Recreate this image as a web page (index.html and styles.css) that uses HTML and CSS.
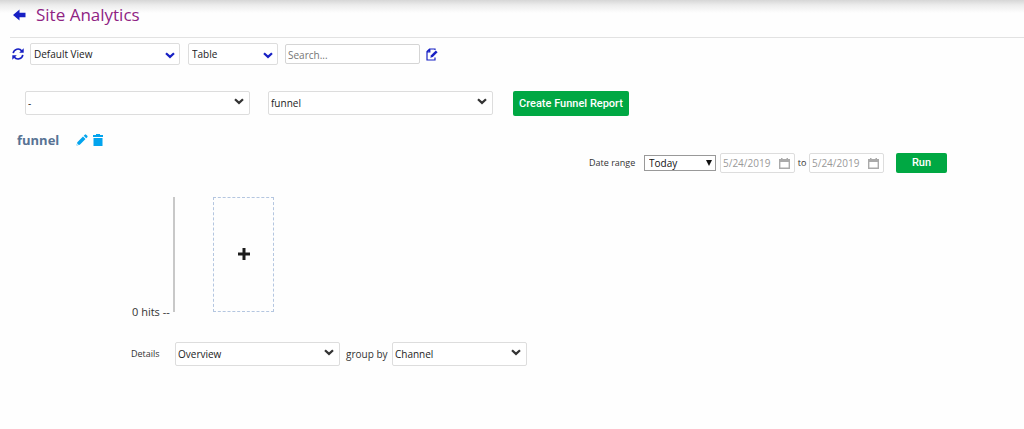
FILE: index.html
```html
<!DOCTYPE html>
<html lang="en">
<head>
<meta charset="utf-8">
<title>Site Analytics</title>
<link rel="stylesheet" href="styles.css">
</head>
<body>
<svg class="defs" width="0" height="0" aria-hidden="true">
  <symbol id="chevron" viewBox="0 0 10 7"><path d="M1 1.2 5 4.9 9 1.2" fill="none" stroke="currentColor" stroke-width="2.2"/></symbol>
  <symbol id="calendar" viewBox="0 0 11 11"><path d="M.7 1.700h9.600v8.600H.7z" fill="none" stroke="currentColor" stroke-width="1.400"/><path d="M0 1h11v3H0zM2 0h1.500v2H2zM7.500 0H9v2H7.500z" fill="currentColor"/></symbol>
</svg>
<header class="page-header">
  <a class="back" href="#" aria-label="Back">
    <svg width="13" height="12" viewBox="0 0 13 12"><path d="M0 6 6.500.5v3.300h6v4.400h-6v3.300z" fill="#1720c4"/></svg>
  </a>
  <h1 class="title">Site Analytics</h1>
</header>
<main>
  <div class="toolbar">
    <button class="icon-button refresh" type="button" aria-label="Refresh">
      <svg width="12" height="12" viewBox="0 0 12 12"><path d="M1.200 5.200A4.800 4.800 0 0 1 9.800 3M10.800 6.800A4.800 4.800 0 0 1 2.200 9" fill="none" stroke="#1720c4" stroke-width="1.600"/><path d="M11.700.3v4.500H7.200zM.3 11.700V7.200h4.500z" fill="#1720c4"/></svg>
    </button>
    <span class="picker picker-blue view"><select aria-label="View"><option>Default View</option></select><svg class="chevron"><use href="#chevron"/></svg></span>
    <span class="picker picker-blue layout"><select aria-label="Layout"><option>Table</option></select><svg class="chevron"><use href="#chevron"/></svg></span>
    <input class="search" type="text" placeholder="Search..." aria-label="Search">
    <button class="icon-button edit" type="button" aria-label="Edit view">
      <svg width="12" height="13" viewBox="0 0 12 13"><path d="M9 2V1H3.500L1 3.500V12h8V9.500M1 3.800h2.800V1" fill="none" stroke="#1720c4" stroke-width="1.200"/><path d="M9.800 2.400 11.600 4.200 6.800 9l-2.500.7.700-2.500z" fill="#1720c4"/></svg>
    </button>
  </div>

  <div class="reports">
    <span class="picker report"><select aria-label="Report group"><option>-</option></select><svg class="chevron"><use href="#chevron"/></svg></span>
    <span class="picker report"><select aria-label="Report type"><option>funnel</option></select><svg class="chevron"><use href="#chevron"/></svg></span>
    <button class="button create" type="button">Create Funnel Report</button>
  </div>

  <div class="report-heading">
    <h2 class="report-name">funnel</h2>
    <button class="icon-button pencil" type="button" aria-label="Rename report">
      <svg width="12" height="12" viewBox="0 0 12 12"><path d="M.5 11.500 1.300 8.200 7 2.500 9.500 5 3.800 10.700zM7.700 1.800l1.100-1.100q.7-.7 1.400 0l1.100 1.100q.7.7 0 1.400l-1.100 1.100z" fill="#03a4ee"/><path d="m1.300 9.300 1.400 1.400-1.600.3z" fill="#fff"/></svg>
    </button>
    <button class="icon-button trash" type="button" aria-label="Delete report">
      <svg width="10" height="12" viewBox="0 0 10 12"><path d="M0 1h3V0h4v1h3v2H0zM.5 4h9v8h-9z" fill="#03a4ee"/></svg>
    </button>
  </div>

  <form class="range">
    <label class="range-label" for="range">Date range</label>
    <span class="native"><select id="range"><option>Today</option></select><svg class="triangle" viewBox="0 0 6 6"><path d="M0 0h6L3 6z" fill="#111"/></svg></span>
    <span class="date"><input id="from" type="text" value="5/24/2019" aria-label="From" disabled><svg class="calendar"><use href="#calendar"/></svg></span>
    <label class="to" for="until">to</label>
    <span class="date"><input id="until" type="text" value="5/24/2019" disabled><svg class="calendar"><use href="#calendar"/></svg></span>
    <button class="button run" type="button">Run</button>
  </form>

  <section class="funnel" aria-label="Funnel">
    <span class="hits">0 hits --</span>
    <div class="axis"></div>
    <button class="add-step" type="button" aria-label="Add step">
      <svg width="12" height="12" viewBox="0 0 12 12"><path d="M6 0v12M0 6h12" stroke="#1c1c1c" stroke-width="3"/></svg>
    </button>
  </section>

  <div class="details">
    <label class="details-label" for="details">Details</label>
    <span class="picker detail"><select id="details"><option>Overview</option></select><svg class="chevron"><use href="#chevron"/></svg></span>
    <label class="group-label" for="group">group by</label>
    <span class="picker group"><select id="group"><option>Channel</option></select><svg class="chevron"><use href="#chevron"/></svg></span>
  </div>
</main>
</body>
</html>
```
FILE: styles.css
```css
* { box-sizing: border-box; }
body {
  margin: 0;
  background: #fefefe;
  color: #333;
  font: 10px/16px "Open Sans", "Noto Sans", sans-serif;
}
button, input, select { font: inherit; color: inherit; margin: 0; }
svg { display: block; }
.defs { position: absolute; }

.page-header {
  display: flex;
  align-items: center;
  height: 37px;
  padding: 0 0 7px 13px;
  background: linear-gradient(#d6d6d6, #ececec 5px, #fefefe 13px);
}
.title {
  margin: 0 0 0 10px;
  font-size: 17px;
  line-height: 24px;
  font-weight: 400;
  color: #8f2383;
}

.toolbar {
  display: flex;
  align-items: center;
  margin-left: 10px;
  padding: 5px 0 0 2px;
  border-top: 1px solid #e2e2e2;
}
.icon-button { padding: 0; border: 0; background: none; }
.refresh { margin-right: 6px; }

.picker { display: grid; align-items: center; color: #222; }
.picker select {
  grid-area: 1 / 1;
  width: 100%;
  height: 24px;
  padding: 0 20px 0 2px;
  appearance: none;
  background: #fff;
  border: 1px solid #ddd;
  border-radius: 2px;
}
.chevron {
  grid-area: 1 / 1;
  justify-self: end;
  width: 10px;
  height: 7px;
  margin: 0 6px 3px 0;
  pointer-events: none;
  color: #333;
}
.picker-blue select { height: 22px; padding-left: 3px; }
.picker-blue .chevron { color: #1720c4; margin: 3px 5px 0 0; }
.view { width: 150px; margin-right: 8px; }
.layout { width: 90px; margin-right: 7px; }
.search {
  width: 135px;
  height: 20px;
  padding: 1px 2px 0;
  background: #fff;
  border: 1px solid #d5d5d5;
  border-radius: 2px;
}
.search::placeholder { color: #757575; opacity: 1; }
.edit { margin-left: 6px; }

.reports { display: flex; align-items: flex-start; padding: 26px 0 0 25px; }
.report { width: 225px; margin-right: 18px; }
.button {
  padding: 0;
  border: 0;
  border-radius: 2px;
  background: #00a843;
  color: #fff;
}
.create {
  width: 116px;
  height: 25px;
  margin-left: 2px;
  font: 500 11px/16px Roboto, sans-serif;
}

.report-heading { display: flex; align-items: center; padding: 15px 0 0 17px; }
.report-name {
  margin: 0;
  font-size: 13px;
  line-height: 18px;
  font-weight: 700;
  color: #587394;
}
.pencil { margin-left: 17px; }
.trash { margin-left: 5px; }

.range { display: flex; align-items: center; padding: 4px 0 0 589px; }
.range-label { width: 55px; font-size: 9px; white-space: nowrap; }
.native { display: grid; align-items: center; width: 72px; margin-right: 4px; }
.native select {
  grid-area: 1 / 1;
  height: 16px;
  padding: 0 16px 0 4px;
  line-height: 14px;
  appearance: none;
  border: 1px solid #999;
  border-radius: 0;
  background: #fff;
  color: #111;
}
.triangle { grid-area: 1 / 1; justify-self: end; width: 6px; height: 6px; margin-right: 4px; pointer-events: none; }
.date { display: grid; align-items: center; width: 75px; }
.date input {
  grid-area: 1 / 1;
  width: 100%;
  height: 20px;
  padding: 0 0 0 2px;
  border: 1px solid #ddd;
  border-radius: 2px;
  background: #fff;
  color: #999;
}
.calendar { grid-area: 1 / 1; justify-self: end; width: 11px; height: 11px; margin-right: 5px; color: #aaa; }
.to { width: 14px; font-size: 9px; text-align: center; }
.run { width: 51px; height: 20px; margin-left: 12px; font: 500 11px/16px Roboto, sans-serif; }

.funnel { display: flex; align-items: flex-end; padding: 24px 0 0 132px; }
.hits { width: 41px; margin-bottom: -8px; font-size: 11px; white-space: nowrap; }
.axis { width: 2px; height: 115px; background: #c8c8c8; }
.add-step {
  display: grid;
  place-items: center;
  width: 61px;
  height: 115px;
  margin-left: 38px;
  padding: 0 0 2px;
  border: 1px dashed #b4c6e0;
  background: none;
}

.details { display: flex; align-items: center; padding: 30px 0 20px 131px; }
.details-label { width: 44px; font-size: 9px; }
.detail { width: 165px; }
.group-label { width: 52px; padding-left: 6px; white-space: nowrap; }
.group { width: 135px; }
```
